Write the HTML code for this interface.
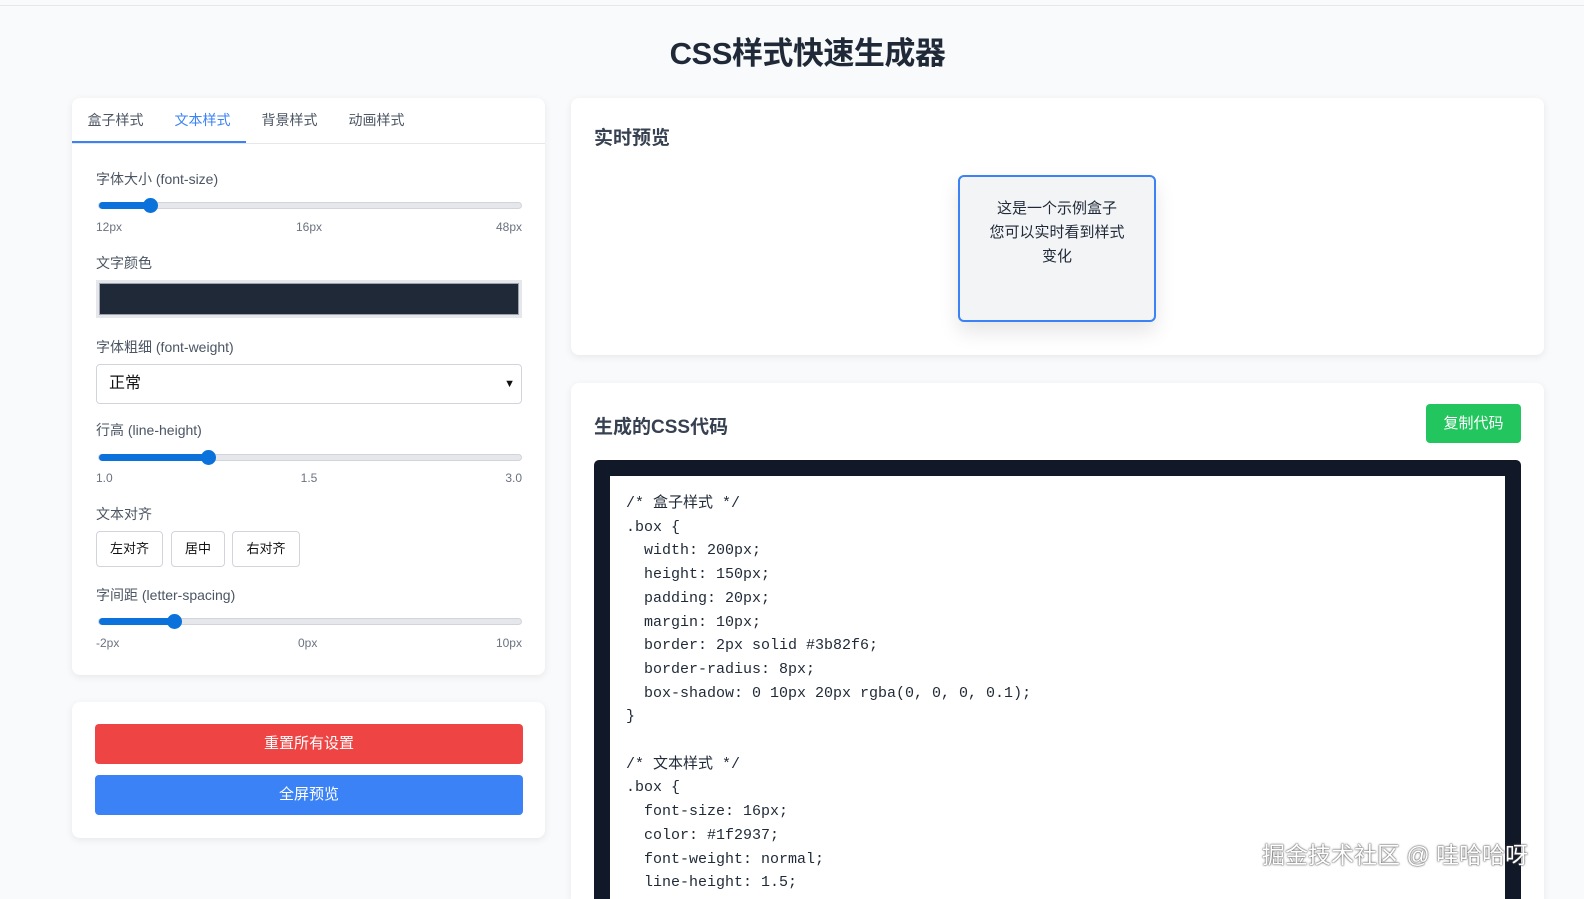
<!DOCTYPE html><html><head><meta charset="utf-8"><style>
*{box-sizing:border-box;margin:0;padding:0}
html,body{width:1584px;height:899px;overflow:hidden}
body{background:#f8fafc;font-family:"Liberation Sans","Noto Sans CJK SC",sans-serif;color:#374151;position:relative}
.topline{position:absolute;left:0;right:0;top:5px;height:1px;background:#e5e7eb}
h1{position:absolute;top:28px;left:0;width:1615px;text-align:center;font-size:31px;font-weight:700;color:#1f2937;letter-spacing:-0.5px}
.card{position:absolute;background:#fff;border-radius:8px;box-shadow:0 2px 8px rgba(0,0,0,.08);overflow:hidden}
.tabs{height:46px;border-bottom:1px solid #e5e7eb;display:flex}
.tab{width:87px;text-align:center;font-size:14px;line-height:44px;color:#4b5563}
.tab.a{color:#3b82f6;border-bottom:2px solid #3b82f6}
.lbl{position:absolute;left:24px;font-size:14px;color:#4b5563}
.track{position:absolute;left:26px;width:424px;height:7px;border-radius:4px;background:#e5e7eb;border:1px solid #d1d5db}
.fill{position:absolute;left:0;top:-1px;height:7px;background:#0b72dc;border-radius:4px}
.knob{position:absolute;top:-5px;width:15px;height:15px;border-radius:50%;background:#0b72dc}
.ticks{position:absolute;left:24px;width:426px;display:flex;justify-content:space-between;font-size:12px;color:#6b7280}
.btn{position:absolute;height:36px;border:1px solid #d1d5db;border-radius:4px;font-size:13px;line-height:34px;text-align:center;color:#111}
.big{position:absolute;left:23px;width:428px;height:40px;border-radius:4px;color:#fff;text-align:center;line-height:40px;font-size:15px}
pre{font-family:"Liberation Mono","Noto Sans CJK SC",monospace;font-size:15px;line-height:23.7px;color:#1f2937}
</style></head><body>
<div class="topline"></div>
<h1>CSS样式快速生成器</h1>
<div class="card" style="left:72px;top:98px;width:473px;height:577px">
 <div class="tabs"><div class="tab" style="border-bottom:2px solid #3b82f6">盒子样式</div><div class="tab a">文本样式</div><div class="tab">背景样式</div><div class="tab">动画样式</div></div>
 <div class="lbl" style="top:71px">字体大小 (font-size)</div>
 <div class="track" style="top:104px"><div class="fill" style="width:52px"></div><div class="knob" style="left:44px"></div></div>
 <div class="ticks" style="top:122px"><span>12px</span><span>16px</span><span>48px</span></div>
 <div class="lbl" style="top:155px">文字颜色</div>
 <div style="position:absolute;left:24px;top:182px;width:426px;height:38px;background:#e5e7eb;padding:3px"><div style="background:#1f2937;height:32px;border:1px solid #9ca3af"></div></div>
 <div class="lbl" style="top:239px">字体粗细 (font-weight)</div>
 <div style="position:absolute;left:24px;top:266px;width:426px;height:40px;border:1px solid #d1d5db;border-radius:4px;font-size:16px;line-height:38px;padding-left:12px;color:#111">正常<span style="position:absolute;right:6px;font-size:11px">&#9660;</span></div>
 <div class="lbl" style="top:322px">行高 (line-height)</div>
 <div class="track" style="top:356px"><div class="fill" style="width:110px"></div><div class="knob" style="left:102px"></div></div>
 <div class="ticks" style="top:373px"><span>1.0</span><span>1.5</span><span>3.0</span></div>
 <div class="lbl" style="top:406px">文本对齐</div>
 <div class="btn" style="left:24px;top:433px;width:67px">左对齐</div>
 <div class="btn" style="left:99px;top:433px;width:54px">居中</div>
 <div class="btn" style="left:160px;top:433px;width:68px">右对齐</div>
 <div class="lbl" style="top:487px">字间距 (letter-spacing)</div>
 <div class="track" style="top:520px"><div class="fill" style="width:76px"></div><div class="knob" style="left:68px"></div></div>
 <div class="ticks" style="top:538px"><span>-2px</span><span>0px</span><span>10px</span></div>
</div>
<div class="card" style="left:72px;top:702px;width:473px;height:136px">
 <div class="big" style="top:22px;background:#ef4444">重置所有设置</div>
 <div class="big" style="top:73px;background:#3b82f6">全屏预览</div>
</div>
<div class="card" style="left:571px;top:98px;width:973px;height:257px;overflow:visible">
 <div style="position:absolute;left:23px;top:25px;font-size:19px;font-weight:700;color:#374151">实时预览</div>
 <div style="position:absolute;left:387px;top:77px;width:198px;height:147px;border:2px solid #3b82f6;border-radius:6px;background:#f3f4f6;box-shadow:0 10px 20px rgba(0,0,0,.1);text-align:center;font-size:15px;line-height:24px;padding:20px 4px;color:#1f2937">这是一个示例盒子<br>您可以实时看到样式<br>变化</div>
</div>
<div class="card" style="left:571px;top:383px;width:973px;height:516px;border-radius:8px 8px 0 0">
 <div style="position:absolute;left:23px;top:29px;font-size:19px;font-weight:700;color:#374151">生成的CSS代码</div>
 <div style="position:absolute;left:855px;top:21px;width:95px;height:39px;background:#22c55e;border-radius:4px;color:#fff;font-size:15px;text-align:center;line-height:39px">复制代码</div>
 <div style="position:absolute;left:23px;top:77px;width:927px;height:439px;background:#111827;border-radius:5px 5px 0 0;padding:16px 16px 0;overflow:hidden">
  <div style="background:#fff;height:100%;padding:16px 16px;overflow:hidden"><pre>/* 盒子样式 */
.box {
  width: 200px;
  height: 150px;
  padding: 20px;
  margin: 10px;
  border: 2px solid #3b82f6;
  border-radius: 8px;
  box-shadow: 0 10px 20px rgba(0, 0, 0, 0.1);
}

/* 文本样式 */
.box {
  font-size: 16px;
  color: #1f2937;
  font-weight: normal;
  line-height: 1.5;</pre></div>
 </div>
</div>
<div style="position:absolute;left:1262px;top:836px;font-size:23px;color:#fff;text-shadow:0 0 2px #555,0 0 1px #333">掘金技术社区 @ 哇哈哈呀</div>
</body></html>
